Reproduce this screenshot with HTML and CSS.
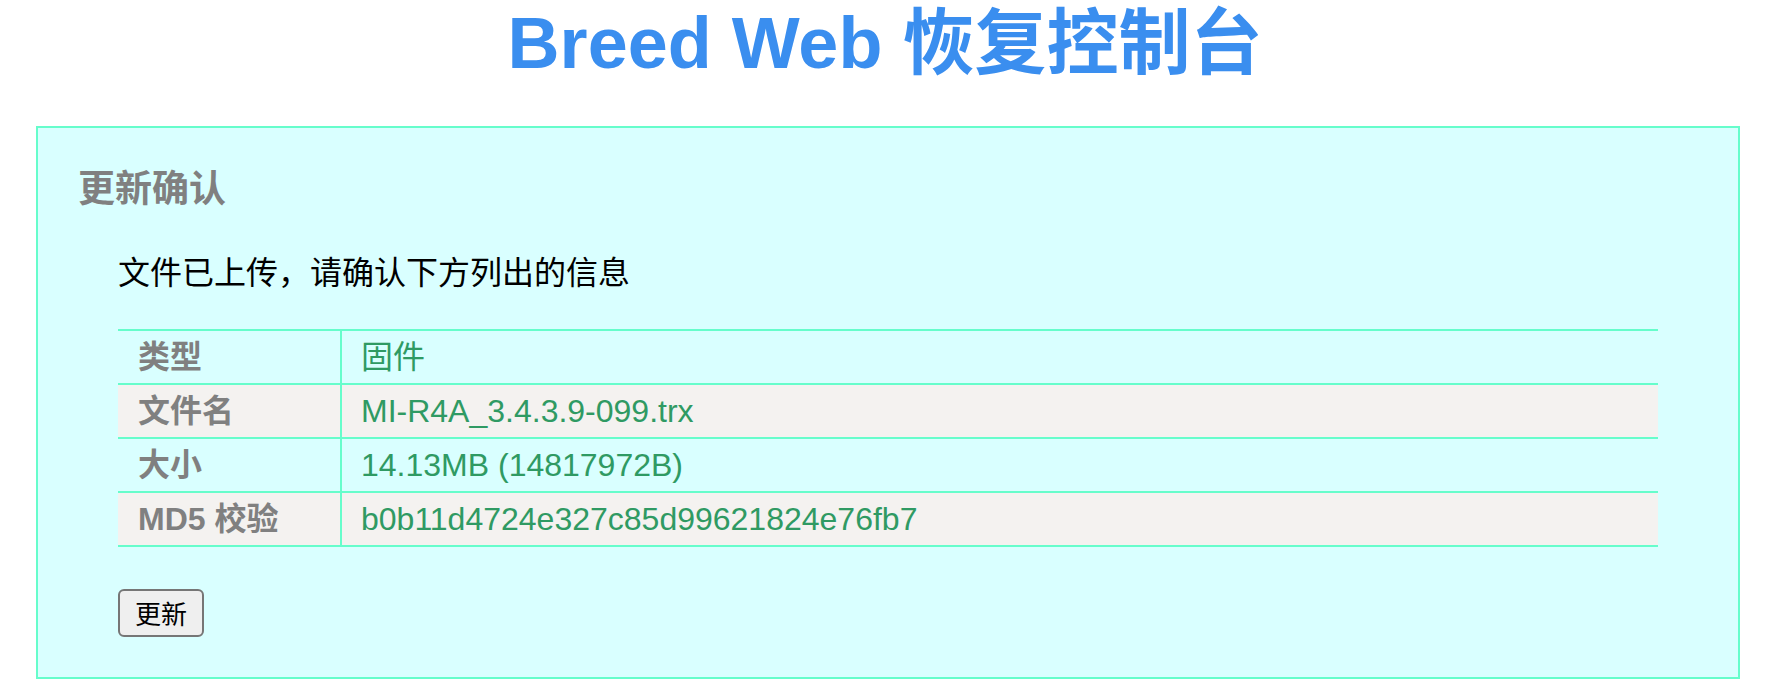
FILE: index.html
```html
<!DOCTYPE html>
<html lang="zh-CN">
<head>
<meta charset="utf-8">
<title>Breed Web 恢复控制台</title>
<link rel="stylesheet" href="styles.css">
</head>
<body>
<header class="top">
  <h1 class="title">Breed Web 恢复控制台</h1>
</header>
<main class="panel">
  <h3 class="panel-title">更新确认</h3>
  <div class="content">
    <p class="note">文件已上传，请确认下方列出的信息</p>
    <div class="info">
      <div class="row">
        <div class="label">类型</div>
        <div class="value">固件</div>
      </div>
      <div class="row alt">
        <div class="label">文件名</div>
        <div class="value">MI-R4A_3.4.3.9-099.trx</div>
      </div>
      <div class="row">
        <div class="label">大小</div>
        <div class="value">14.13MB (14817972B)</div>
      </div>
      <div class="row alt">
        <div class="label">MD5 校验</div>
        <div class="value">b0b11d4724e327c85d99621824e76fb7</div>
      </div>
    </div>
    <div class="actions">
      <button class="btn" type="button">更新</button>
    </div>
  </div>
</main>
</body>
</html>
```
FILE: styles.css
```css
html, body {
  margin: 0;
  padding: 0;
  background: #ffffff;
}

body {
  font-family: "Liberation Sans", "Noto Sans CJK SC", sans-serif;
  color: #000000;
}

.top {
  padding-top: 3px;
  height: 126px;
  box-sizing: border-box;
}

.title {
  margin: 0;
  font-size: 72px;
  line-height: 80px;
  font-weight: bold;
  color: #3a8eef;
  text-align: center;
}

.panel {
  margin: 0 30px 0 36px;
  border: 2px solid #66fdcb;
  background: #d9ffff;
  padding: 40px 40px 40px 40px;
}

.panel-title {
  margin: 0;
  font-size: 37px;
  line-height: 44px;
  font-weight: bold;
  color: #808080;
}

.content {
  padding: 0 40px;
}

.note {
  margin: 43px 0 0 0;
  font-size: 32px;
  line-height: 36px;
}

.info {
  margin-top: 38px;
  border-top: 2px solid #66fdcb;
}

.row {
  display: grid;
  grid-template-columns: 222px 1fr;
  height: 52px;
  border-bottom: 2px solid #66fdcb;
  font-size: 32px;
  line-height: 52px;
}

.row.alt {
  background: #f4f2f0;
}

.label {
  padding-left: 20px;
  font-weight: bold;
  color: #808080;
  white-space: nowrap;
}

.value {
  border-left: 2px solid #66fdcb;
  padding-left: 19px;
  color: #2f9a63;
  white-space: nowrap;
}

.actions {
  margin-top: 42px;
  display: flex;
}

.btn {
  height: 48px;
  padding: 0 15px;
  font-family: "Noto Sans CJK SC", sans-serif;
  font-size: 26px;
  line-height: 44px;
  color: #000000;
  background: #efefef;
  border: 2px solid #767676;
  border-radius: 6px;
}
```
